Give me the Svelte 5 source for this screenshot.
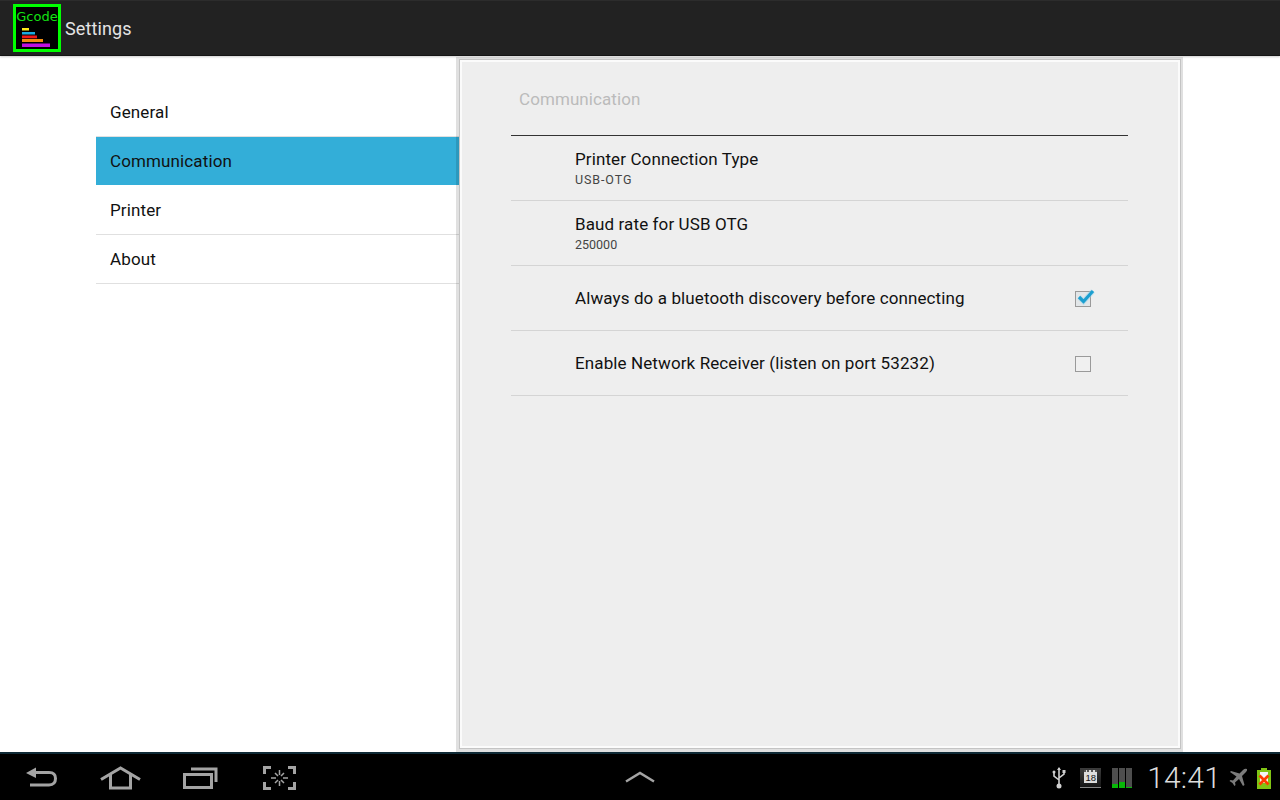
<script>
  const categories = [
    { name: "General" },
    { name: "Communication", active: true },
    { name: "Printer" },
    { name: "About" }
  ];

  const prefs = [
    { title: "Printer Connection Type", summary: "USB-OTG", caps: true },
    { title: "Baud rate for USB OTG", summary: "250000" },
    { title: "Always do a bluetooth discovery before connecting", check: true, checked: true },
    { title: "Enable Network Receiver (listen on port 53232)", check: true, checked: false }
  ];
</script>

<div class="screen">
  <header class="actionbar">
    <div class="logo">
      <span class="logo-text">Gcode</span>
      <svg class="logo-bars" width="42" height="20" viewBox="0 0 42 20">
        <rect x="6" y="1" width="7" height="2.5" fill="#ffeb1a" />
        <rect x="6" y="5" width="13" height="2.5" fill="#19a9e0" />
        <rect x="6" y="8.5" width="15" height="2.8" fill="#f01818" />
        <rect x="6" y="12" width="21" height="3" fill="#f08c10" />
        <rect x="6" y="16.5" width="28" height="3.5" fill="#c010e0" />
      </svg>
    </div>
    <span class="actionbar-title">Settings</span>
  </header>

  <main class="content">
    <nav class="categories">
      {#each categories as cat}
        <div class="category" class:active={cat.active}>{cat.name}</div>
      {/each}
    </nav>

    <section class="panel">
      <div class="panel-inner">
        <h2 class="panel-title">Communication</h2>
        {#each prefs as pref}
          <div class="pref">
            <div class="pref-text" class:two-line={pref.summary}>
              <div class="pref-title">{pref.title}</div>
              {#if pref.summary}
                <div class="pref-summary" class:caps={pref.caps}>{pref.summary}</div>
              {/if}
            </div>
            {#if pref.check}
              <svg class="checkbox" width="26" height="24" viewBox="0 0 26 24">
                <rect x="1.5" y="4.5" width="15" height="15" fill={pref.checked ? "#e2e6e8" : "#f0f0f0"} stroke="#9a9a9a" />
                {#if pref.checked}
                  <path d="M5 10l4.500 4.500L19 4" fill="none" stroke="#8fd0ea" stroke-width="5" opacity="0.45" />
                  <path d="M5 10l4.500 4.500L19 4" fill="none" stroke="#1c9fd0" stroke-width="3.2" />
                {/if}
              </svg>
            {/if}
          </div>
        {/each}
      </div>
    </section>
  </main>

  <footer class="navbar">
    <div class="nav-buttons">
      <svg width="33" height="24" viewBox="0 0 33 24">
        <path d="M1 7l10-5.500v3.500h13q8 0 8 7.500t-8 8H5v-3h19q5 0 5-5t-5-4.500H11v4z" fill="#a4a4a4" />
      </svg>
      <svg class="nav-home" width="41" height="24" viewBox="0 0 41 24">
        <path d="M1 13.500L20.500 2 40 13.500M10.500 8.500V22h20V8.500" fill="none" stroke="#a4a4a4" stroke-width="3" />
      </svg>
      <svg class="nav-recent" width="35" height="24" viewBox="0 0 35 24">
        <rect x="1.500" y="8.500" width="27" height="13" fill="none" stroke="#a4a4a4" stroke-width="3" />
        <path d="M8 3h25v13" fill="none" stroke="#a4a4a4" stroke-width="3" />
      </svg>
      <svg class="nav-shot" width="34" height="24" viewBox="0 0 34 24">
        <path d="M8 1.500H1.500V8M25 1.500h6.500V8M8 22.500H1.500V16M25 22.500h6.500V16" fill="none" stroke="#a4a4a4" stroke-width="3" />
        <path d="M16.500 4v5M16.500 15v5M8 12h5M20 12h5M12 7l3 3M21 7l-3 3M12 17l3-3M21 17l-3-3" fill="none" stroke="#a4a4a4" stroke-width="1.500" />
      </svg>
    </div>

    <svg class="nav-up" width="30" height="12" viewBox="0 0 30 12">
      <path d="M1 10.500L15 2l14 8.500" fill="none" stroke="#a4a4a4" stroke-width="2.500" />
    </svg>

    <div class="status">
      <svg width="14" height="22" viewBox="0 0 14 22">
        <path d="M7 1v18M2 6v3l5 4M12 5v2l-5 4" fill="none" stroke="#d0d0d0" stroke-width="1.600" />
        <path d="M7 0l2 3H5z" fill="#d0d0d0" />
        <circle cx="7" cy="19" r="2.500" fill="#d0d0d0" />
        <circle cx="2" cy="5" r="1.500" fill="#d0d0d0" />
        <rect x="10.500" y="3" width="3" height="3" fill="#d0d0d0" />
      </svg>
      <div class="calendar">
        <div class="calendar-page"><span>18</span></div>
      </div>
      <div class="signal">
        <div class="signal-bar"><div class="signal-fill" style="height: 4px"></div></div>
        <div class="signal-bar"><div class="signal-fill" style="height: 6px"></div></div>
        <div class="signal-bar"><div class="signal-fill" style="height: 1px"></div></div>
      </div>
      <span class="clock">14:41</span>
      <svg class="plane" width="19" height="20" viewBox="0 0 19 20">
        <path d="M18 1q-2-1-4 1l-3.500 3.500L2 3 1 4l6.500 4.500L4 12.500 1.500 12l-1 1 3 2 2 3 1-1-.5-2.500L10 11l4 7 1.500-1L13 8l4-4q1.500-1.500 1-3z" fill="#7c7c7c" />
      </svg>
      <svg width="14" height="21" viewBox="0 0 14 21">
        <rect x="4" y="0" width="6" height="2" fill="#80c414" />
        <rect x="0" y="2" width="14" height="19" fill="#80c414" />
        <rect x="3" y="4" width="8" height="11" fill="#f4f4f4" />
        <path d="M2.500 7.500l9 9M11.500 7.500l-9 9" stroke="#ff3a00" stroke-width="2.800" fill="none" />
      </svg>
    </div>
  </footer>
</div>

<style>
  :global(body) {
    margin: 0;
    background: #fff;
  }

  .screen {
    display: flex;
    flex-direction: column;
    width: 1280px;
    height: 800px;
    overflow: hidden;
    font-family: Roboto, "Liberation Sans", sans-serif;
  }

  .actionbar {
    display: flex;
    align-items: center;
    flex: none;
    position: relative;
    z-index: 1;
    box-sizing: border-box;
    height: 56px;
    padding-left: 13px;
    background: #222;
    border-top: 1px solid #2c2c2c;
    border-bottom: 1px solid #151515;
    box-shadow: 0 1px 2px rgba(0, 0, 0, 0.2);
  }

  .logo {
    display: flex;
    flex-direction: column;
    align-items: center;
    box-sizing: border-box;
    width: 48px;
    height: 48px;
    margin-top: -1px;
    border: 3px solid #0f0;
    background: #000;
  }

  .logo-text {
    height: 18px;
    font-family: "DejaVu Sans", sans-serif;
    font-size: 13px;
    line-height: 20px;
    color: #14e014;
  }

  .logo-bars {
    display: block;
    margin-top: 2px;
  }

  .actionbar-title {
    margin-left: 4px;
    font-size: 18px;
    letter-spacing: 0.1px;
    color: #e4e4e4;
  }

  .content {
    display: flex;
    flex: 1;
    min-height: 0;
  }

  .categories {
    flex: none;
    box-sizing: border-box;
    width: 360px;
    margin-left: 96px;
    padding-top: 32px;
  }

  .category {
    box-sizing: border-box;
    height: 49px;
    margin-right: -3px;
    padding-left: 14px;
    border-bottom: 1px solid #e0e0e0;
    font-size: 17px;
    letter-spacing: 0.12px;
    line-height: 48px;
    color: #111;
  }

  .category.active {
    background: #33aed8;
    border-bottom-color: #fff;
  }

  /* translucent frame, so the active row shows through darker */
  .panel {
    flex: none;
    position: relative;
    box-sizing: border-box;
    width: 727px;
    margin-top: 1px;
    padding: 3px 3px 4px 4px;
    background: rgba(0, 0, 0, 0.12);
  }

  .panel-inner {
    box-sizing: border-box;
    height: 100%;
    padding: 0 50px 0 49px;
    background: #eee;
    outline: 1px solid #c4c4c4;
    border: 2px solid #fbfbfb;
  }

  .panel-title {
    box-sizing: border-box;
    height: 74px;
    margin: 0;
    padding: 26px 0 0 8px;
    border-bottom: 1px solid #333;
    font-size: 17px;
    font-weight: 400;
    letter-spacing: 0.08px;
    line-height: 22px;
    color: #bbb;
  }

  .pref {
    display: flex;
    align-items: center;
    justify-content: space-between;
    box-sizing: border-box;
    height: 65px;
    padding: 0 35px 0 64px;
    border-bottom: 1px solid #d4d4d4;
  }

  .pref-text.two-line {
    padding-bottom: 1px;
  }

  .pref-title {
    font-size: 17px;
    letter-spacing: 0.11px;
    line-height: 22px;
    color: #111;
  }

  .pref-summary {
    margin-top: 2px;
    font-size: 12.5px;
    line-height: 16px;
    color: #444;
  }

  .pref-summary.caps {
    letter-spacing: 0.9px;
  }

  .checkbox {
    display: block;
    margin: 1px -7px 0 0;
  }

  .navbar {
    display: flex;
    align-items: center;
    flex: none;
    box-sizing: border-box;
    height: 48px;
    padding-left: 25px;
    background: #000;
    border-top: 2px solid #0f2a36;
  }

  .nav-buttons {
    display: flex;
    align-items: center;
    width: 271px;
    margin-top: 2px;
  }

  .nav-buttons svg {
    display: block;
    flex: none;
  }

  .nav-home,
  .nav-recent {
    margin-left: 42px;
  }

  .nav-shot {
    margin-left: 45px;
  }

  .nav-up {
    display: block;
    margin-left: 329px;
    margin-top: -1px;
  }

  .status {
    display: flex;
    align-items: center;
    margin-left: auto;
    margin-top: 2px;
    padding-right: 9px;
  }

  .status svg {
    display: block;
    flex: none;
  }

  .calendar {
    box-sizing: border-box;
    width: 21px;
    height: 20px;
    margin-left: 14px;
    padding: 2px 4px 0;
    background: linear-gradient(#3c3c3c, #161616);
    border-bottom: 1px solid #888;
  }

  .calendar-page {
    display: flex;
    align-items: flex-end;
    justify-content: flex-end;
    box-sizing: border-box;
    height: 13px;
    padding: 0 1px 0 0;
    background: #dcdcdc;
    border-top: 2px dotted #555;
  }

  .calendar-page span {
    font-family: "Liberation Sans", sans-serif;
    font-size: 9.5px;
    line-height: 10px;
    color: #111;
  }

  .signal {
    display: flex;
    gap: 1px;
    margin-left: 11px;
  }

  .signal-bar {
    display: flex;
    align-items: flex-end;
    width: 6px;
    height: 20px;
    background: #4e4e4e;
  }

  .signal-fill {
    width: 100%;
    background: #08b808;
  }

  .clock {
    margin-left: 15px;
    font-size: 30px;
    font-weight: 300;
    letter-spacing: 0.2px;
    line-height: 34px;
    color: #ddd;
  }

  .plane {
    margin-left: 8px;
  }

  .plane + svg {
    margin-left: 9px;
  }
</style>
